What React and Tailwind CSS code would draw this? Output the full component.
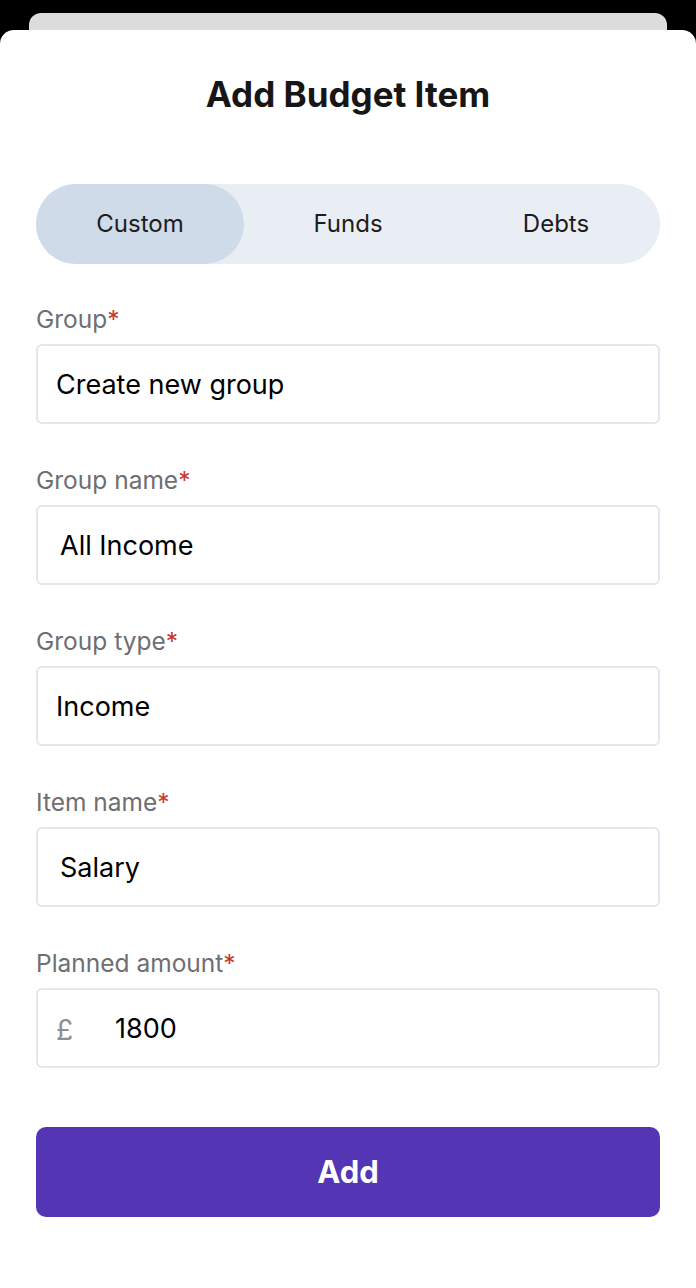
const fields = [
  { label: "Group", value: "Create new group", pad: "pl-[18px]" },
  { label: "Group name", value: "All Income", pad: "pl-[22px]" },
  { label: "Group type", value: "Income", pad: "pl-[18px]" },
  { label: "Item name", value: "Salary", pad: "pl-[22px]" },
];

const Field = ({ label, children }) => (
  <div className="flex flex-col">
    <label className="text-[24.5px] leading-[30px] text-[#6e6e73]">
      {label}
      <span className="text-[#c8382e]">*</span>
    </label>
    <div className="mt-[10px] h-[80px] flex items-center pt-[3px] rounded-md border-2 border-[#e3e6ee] bg-white">
      {children}
    </div>
  </div>
);

const App = () => {
  return (
    <div className="min-h-[1288px] bg-black font-['Inter','Liberation_Sans',sans-serif]">
      <div className="h-[13px]" />
      <div className="mx-[29px] h-[17px] rounded-t-[12px] bg-[#dcdcdc]" />
      <div className="min-h-[1258px] rounded-t-[14px] bg-white px-9">
        <h1 className="pt-[42px] text-center text-[35px] leading-[44px] font-bold text-[#161616]">
          Add Budget Item
        </h1>

        <div className="mt-[68px] flex h-[80px] rounded-full bg-[#e9eef4] text-[24px] text-[#1c1c1e]">
          <button className="w-[208px] rounded-full bg-[#cfdbe9]">Custom</button>
          <button className="w-[208px]">Funds</button>
          <button className="w-[208px]">Debts</button>
        </div>

        <div className="mt-[40px] flex flex-col gap-[41px]">
          {fields.map((f) => (
            <Field key={f.label} label={f.label}>
              <span className={`${f.pad} text-[27px] text-black`}>{f.value}</span>
            </Field>
          ))}
          <Field label="Planned amount">
            <span className="pl-[18px] w-[77px] text-[28px] text-[#8e8e93]">£</span>
            <span className="text-[27px] text-black">1800</span>
          </Field>
        </div>

        <button className="mt-[59px] h-[90px] w-full rounded-[10px] bg-[#5436b5] text-[31px] font-bold text-white">
          Add
        </button>
      </div>
    </div>
  );
};

export default App;
